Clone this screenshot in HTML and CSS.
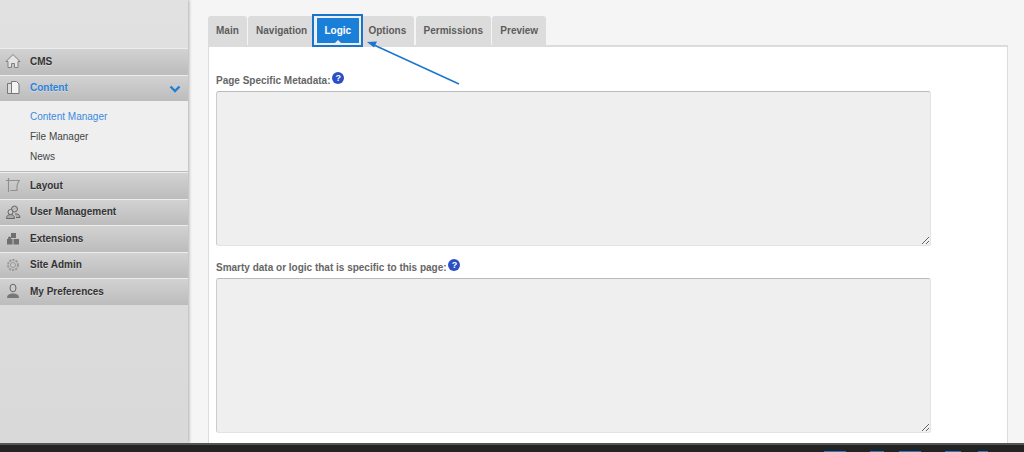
FILE: index.html
```html
<!DOCTYPE html>
<html lang="en">
<head>
<meta charset="utf-8">
<title>Logic tab</title>
<link rel="stylesheet" href="styles.css">
</head>
<body>
<div class="shell">
  <aside class="sidebar">
    <nav class="menu">
      <a class="item">
        <svg class="ico" viewBox="0 0 16 16"><path d="M8 1.500 1 8.500h2v6h3.500v-4h3v4H13v-6h2L8 1.500z" fill="#e4e4e4" stroke="#808080" stroke-width="1"/></svg>
        <span>CMS</span>
      </a>
      <a class="item item-open">
        <svg class="ico" viewBox="0 0 16 16"><path d="M2.500 3.500h6v10h-6z" fill="#ddd" stroke="#777"/><path d="M6.500 1.500h5l2.500 2.500v9.500H6.500z" fill="#f4f4f4" stroke="#777"/></svg>
        <span>Content</span>
        <svg class="chev" viewBox="0 0 12 8"><path d="M1.500 1.500 6 6l4.500-4.500" fill="none" stroke="#1f7fd6" stroke-width="2.400"/></svg>
      </a>
      <div class="submenu">
        <a class="sub sub-active">Content Manager</a>
        <a class="sub">File Manager</a>
        <a class="sub">News</a>
      </div>
      <a class="item">
        <svg class="ico" viewBox="0 0 16 16"><path d="M3.500 1v14M1 3.500h14M3.500 3.500H14l-2 5v5H5.500" fill="none" stroke="#8f8f8f" stroke-width="1.100"/></svg>
        <span>Layout</span>
      </a>
      <a class="item">
        <svg class="ico" viewBox="0 0 16 16"><circle cx="9.500" cy="5" r="3" fill="#bbb" stroke="#666"/><circle cx="5.500" cy="8" r="2.500" fill="#ccc" stroke="#666"/><path d="M1.500 14.500c0-3 2-4 4-4s4 1 4 4zM10 10c2.500-.5 5 .5 5 3.500h-4" fill="#aaa" stroke="#666"/></svg>
        <span>User Management</span>
      </a>
      <a class="item">
        <svg class="ico" viewBox="0 0 16 16"><path d="M2 9h5.500v5.500H2zM8.500 9H14v5.500H8.500zM6 3h5v5H6z" fill="#6f6f6f"/><circle cx="4.500" cy="8" r="1.500" fill="#6f6f6f"/></svg>
        <span>Extensions</span>
      </a>
      <a class="item">
        <svg class="ico" viewBox="0 0 16 16"><circle cx="8" cy="8" r="5" fill="none" stroke="#999" stroke-width="2" stroke-dasharray="2.200 1"/><circle cx="8" cy="8" r="2.500" fill="none" stroke="#999"/></svg>
        <span>Site Admin</span>
      </a>
      <a class="item">
        <svg class="ico" viewBox="0 0 16 16"><ellipse cx="8" cy="5" rx="3" ry="3.800" fill="#ccc" stroke="#666"/><path d="M2 15c0-3.500 3-4.500 6-4.500s6 1 6 4.500z" fill="#777"/></svg>
        <span>My Preferences</span>
      </a>
    </nav>
  </aside>
  <main class="main">
    <ul class="tabs">
      <li class="tab">Main</li>
      <li class="tab">Navigation</li>
      <li class="tab tab-active">Logic</li>
      <li class="tab">Options</li>
      <li class="tab">Permissions</li>
      <li class="tab">Preview</li>
    </ul>
    <section class="panel">
      <label class="field-label">Page Specific Metadata: <span class="help">?</span></label>
      <textarea class="field"></textarea>
      <label class="field-label">Smarty data or logic that is specific to this page: <span class="help">?</span></label>
      <textarea class="field"></textarea>
    </section>
  </main>
</div>
<footer class="footer">
  <i class="mark mark-a"></i><i class="mark mark-b"></i><i class="mark mark-c"></i><i class="mark mark-d"></i><i class="mark mark-e"></i>
</footer>
<div class="callout"></div>
<svg class="arrow" viewBox="0 0 1024 452"><path d="M459 84 374 45" stroke="#1b76d0" stroke-width="1.500" fill="none"/><path d="M367 42l10-.500-3 6z" fill="#1b76d0"/></svg>
</body>
</html>
```
FILE: styles.css
```css
* { box-sizing: border-box; }
html, body { margin: 0; height: 452px; overflow: hidden; }
body {
  font-family: "Liberation Sans", Arial, sans-serif;
  background: #f5f5f5;
  display: flex;
  flex-direction: column;
}
.shell { display: flex; height: 443px; }
.sidebar {
  width: 188px;
  flex: none;
  background: linear-gradient(#e1e1e1, #d9d9d9);
  box-shadow: 1px 0 3px rgba(0,0,0,.3);
  padding-top: 48px;
  position: relative;
}
.menu { display: flex; flex-direction: column; }
.item {
  height: 26.5px;
  display: flex;
  align-items: center;
  padding: 0 7px 1px 5px;
  gap: 2px;
  font-size: 10px;
  font-weight: bold;
  color: #333;
  background: linear-gradient(#d2d2d2, #bcbcbc);
  border-top: 1px solid #ededed;
  text-shadow: 0 1px 0 rgba(255,255,255,.35);
}
.item span { margin-left: 7px; flex: 1; }
.item-open { color: #2a83de; }
.ico { width: 16px; height: 16px; flex: none; }
.chev { width: 12px; height: 8px; flex: none; margin-top: 3px; }
.submenu {
  background: #efefef;
  height: 71px;
  padding-top: 6px;
  border-bottom: 1px solid #bbb;
  display: flex;
  flex-direction: column;
}
.sub { height: 20px; line-height: 20px; padding-left: 30px; font-size: 10px; color: #444; }
.sub-active { color: #3a8ae0; }

.main { flex: 1; padding: 16px 16px 0 20px; display: flex; flex-direction: column; }
.tabs { list-style: none; margin: 0; padding: 0; display: flex; gap: 1.300px; height: 30px; }
.tab {
  height: 30px;
  padding: 0 8px;
  line-height: 29px;
  font-size: 10px;
  font-weight: bold;
  color: #5c5c5c;
  background: #dcdcdc;
  border-radius: 3px 3px 0 0;
}
.tab-active {
  height: 29px;
  background: #1a7fd9;
  color: #fff;
  position: relative;
  z-index: 1;
}
.tab-active::after {
  content: "";
  position: absolute;
  left: 50%;
  bottom: 0;
  margin-left: -5px;
  border: 5px solid transparent;
  border-top: 0;
  border-bottom-color: #eee;
}
.panel {
  flex: 1;
  margin-top: -1px;
  background: #fff;
  border: 1px solid #dcdcdc;
  border-top-width: 2px;
  border-bottom: 0;
  padding: 25px 0 0 7px;
  display: flex;
  flex-direction: column;
}
.field-label {
  display: block;
  height: 19px;
  font-size: 10px;
  font-weight: bold;
  color: #666;
  line-height: 15px;
}
.help {
  display: inline-block;
  width: 12px;
  height: 12px;
  margin-left: -1px;
  border-radius: 50%;
  background: #2b4fc4;
  color: #fff;
  font-size: 9px;
  line-height: 12px;
  text-align: center;
  vertical-align: 3px;
}
.field {
  display: block;
  width: 715px;
  height: 155px;
  flex: none;
  margin: 0 0 13px;
  padding: 0;
  background: #efefef;
  border: 1px solid #e3e3e3;
  border-top-color: #bbb;
  border-left-color: #ccc;
  border-radius: 3px;
  outline: 0;
}
.footer {
  height: 9px;
  background: #232323;
  border-top: 2px solid #555;
  position: relative;
  overflow: hidden;
}
.mark { position: absolute; bottom: 0; height: 1px; background: #2a76c0; }
.mark-a { left: 824px; width: 22px; }
.mark-b { left: 870px; width: 14px; }
.mark-c { left: 899px; width: 22px; }
.mark-d { left: 945px; width: 16px; }
.mark-e { left: 978px; width: 10px; }
.callout {
  position: absolute;
  left: 312px;
  top: 14px;
  width: 51px;
  height: 33px;
  border: 2px solid #1a74cc;
  box-shadow: inset 0 0 0 2px #eeeeee;
  z-index: 2;
  pointer-events: none;
}
.arrow { position: absolute; left: 0; top: 0; width: 1024px; height: 452px; z-index: 2; pointer-events: none; }
```
